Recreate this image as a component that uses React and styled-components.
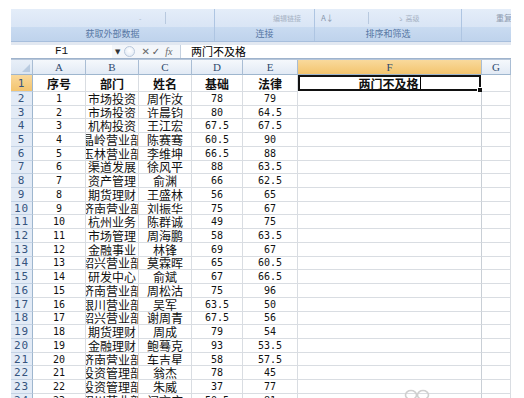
import React from "react";
import styled, { createGlobalStyle, css } from "styled-components";

const Global = createGlobalStyle`
  html, body { margin: 0; padding: 0; background: #ffffff; }
  body { width: 524px; height: 398px; overflow: hidden; }
`;

const Page = styled.div`
  position: relative;
  width: 524px;
  height: 398px;
  overflow: hidden;
  padding: 9px 13px 0 11px;
  box-sizing: border-box;
  background: #fff;
`;

const Window = styled.div`
  width: 500px;
  display: flex;
  flex-direction: column;
`;

const Ribbon = styled.div`
  height: 33px;
  display: flex;
  background: #d6e3f3;
  border-bottom: 1px solid #a7bedc;
  box-sizing: border-box;
`;

const Group = styled.div`
  width: ${(p) => p.$w}px;
  display: flex;
  flex-direction: column;
  border-right: 1px solid #aec5e2;
  box-shadow: inset -1px 0 0 #eef4fb;
  box-sizing: border-box;
  ${(p) => p.$last && css`border-right: none; box-shadow: none;`}
`;

const GroupBody = styled.div`
  flex: 1;
  position: relative;
  display: flex;
  align-items: center;
  background: linear-gradient(#e4edf9, #d9e5f5);
  font-family: "Noto Sans CJK SC", sans-serif;
  font-size: 8px;
  color: #9aa9bd;
  overflow: hidden;
  white-space: nowrap;
`;

const GroupLabel = styled.div`
  height: 14px;
  line-height: 14px;
  text-align: center;
  background: linear-gradient(#c9dbf1, #bfd3ec);
  font-family: "Noto Sans CJK SC", sans-serif;
  font-size: 9px;
  color: #5777a3;
  white-space: nowrap;
  overflow: hidden;
`;

const Faint = styled.span`
  margin-left: ${(p) => p.$ml || 0}px;
  color: ${(p) => p.$c || "#a7b3c4"};
  font-size: ${(p) => p.$fs || 8}px;
  line-height: 1;
`;

const VLine = styled.span`
  display: inline-block;
  width: 1px;
  height: 12px;
  margin-left: ${(p) => p.$ml || 0}px;
  background: #b8c9df;
`;

const Spacer = styled.div`
  height: 3px;
  background: #e2e8f1;
`;

const FormulaBar = styled.div`
  height: 14px;
  display: flex;
  align-items: stretch;
  background: #fff;
  border-bottom: 1px solid #9fb3cc;
  box-sizing: border-box;
`;

const NameBox = styled.div`
  width: 101px;
  font-family: "Liberation Mono", monospace;
  font-size: 11px;
  line-height: 13px;
  text-align: center;
  color: #111;
  background: #fff;
`;

const Controls = styled.div`
  width: 68px;
  display: flex;
  align-items: center;
  background: #f3f6fa;
  border-right: 1px solid #c5d1e0;
  font-family: "DejaVu Sans", sans-serif;
  color: #555;
`;

const Arrow = styled.span`
  margin-left: 3px;
  font-size: 7px;
  color: #333;
`;

const RoundBtn = styled.span`
  margin-left: 4px;
  width: 11px;
  height: 11px;
  border-radius: 50%;
  border: 1px solid #b9c8dc;
  background: radial-gradient(circle at 50% 40%, #ffffff, #dde7f3);
  box-sizing: border-box;
`;

const Glyph = styled.span`
  margin-left: ${(p) => p.$ml}px;
  font-size: ${(p) => p.$fs || 10}px;
  color: ${(p) => p.$c || "#6a6a6a"};
  font-style: ${(p) => (p.$i ? "italic" : "normal")};
  font-family: ${(p) => (p.$i ? '"Liberation Serif", serif' : '"DejaVu Sans", sans-serif')};
  line-height: 1;
`;

const FormulaText = styled.div`
  flex: 1;
  padding-left: 10px;
  font-family: "Noto Sans CJK SC", sans-serif;
  font-size: 11px;
  line-height: 13px;
  color: #000;
`;

const Sheet = styled.div`
  display: grid;
  grid-template-columns: 22px 53px 53px 53px 51px 55px 184px 29px;
  grid-template-rows: 15px 17px repeat(23, 13.72px);
  border-top: 1px solid #b6c6da;
`;

const ColHead = styled.div`
  box-sizing: border-box;
  border-right: 1px solid #a9bdd4;
  border-bottom: 1px solid #9eb6ce;
  background: ${(p) =>
    p.$sel
      ? "linear-gradient(#f9d99c, #f3c46e)"
      : "linear-gradient(#f5f8fc, #e2eaf5)"};
  font-family: "Liberation Serif", serif;
  font-size: 11px;
  line-height: 14px;
  text-align: center;
  color: #2f4a6e;
  overflow: hidden;
`;

const Corner = styled(ColHead)`
  position: relative;
  background: linear-gradient(#e8eff8, #dae5f2);
  &::after {
    content: "";
    position: absolute;
    right: 2px;
    bottom: 2px;
    border-left: 8px solid transparent;
    border-bottom: 8px solid #b9cbe0;
  }
`;

const RowHead = styled.div`
  box-sizing: border-box;
  border-right: 1px solid #9eb6ce;
  border-bottom: 1px solid #c3d2e4;
  background: ${(p) =>
    p.$sel ? "linear-gradient(#f9d99c, #f3c46e)" : "#e3ebf6"};
  font-family: "DejaVu Sans Mono", monospace;
  font-size: 11px;
  letter-spacing: 1px;
  display: flex;
  align-items: center;
  justify-content: center;
  color: #35547e;
  overflow: hidden;
`;

const Cell = styled.div`
  position: relative;
  box-sizing: border-box;
  border-right: 1px solid ${(p) => (p.$edge ? "#c9cfd6" : "#d9dde2")};
  border-bottom: 1px solid #d9dde2;
  display: flex;
  align-items: center;
  justify-content: center;
  white-space: nowrap;
  overflow: hidden;
  color: #111;
  font-family: ${(p) =>
    p.$num
      ? '"DejaVu Sans Mono", "Noto Sans CJK SC", monospace'
      : '"Noto Sans CJK SC", sans-serif'};
  font-size: ${(p) => (p.$bold ? 12 : p.$num ? 10 : 12)}px;
  font-weight: ${(p) => (p.$bold ? 700 : 400)};
  ${(p) =>
    p.$active &&
    css`
      overflow: visible;
      box-shadow: inset 0 0 0 2px #111;
      border-color: transparent;
    `}
`;

const Caret = styled.span`
  display: inline-block;
  width: 1px;
  height: 12px;
  margin-left: 1px;
  background: #000;
`;

const Handle = styled.span`
  position: absolute;
  right: -2px;
  bottom: -2px;
  width: 4px;
  height: 4px;
  background: #111;
  border: 1px solid #fff;
`;

const Watermark = styled.svg`
  position: absolute;
  left: 404px;
  top: 388px;
`;

const cols = ["A", "B", "C", "D", "E", "F", "G"];

const rows = [
  ["1", "市场投资", "周作汝", "78", "79"],
  ["2", "市场投资", "许晨钧", "80", "64.5"],
  ["3", "机构投资", "王江宏", "67.5", "67.5"],
  ["4", "晶岭营业部", "陈赛骞", "60.5", "90"],
  ["5", "玉林营业部", "李维坤", "66.5", "88"],
  ["6", "渠道发展", "徐风平", "88", "63.5"],
  ["7", "资产管理", "俞渊", "66", "62.5"],
  ["8", "期货理财", "王盛林", "56", "65"],
  ["9", "济南营业部", "刘振华", "75", "67"],
  ["10", "杭州业务", "陈群诚", "49", "75"],
  ["11", "市场管理", "周海鹏", "58", "63.5"],
  ["12", "金融事业", "林锋", "69", "67"],
  ["13", "绍兴营业部", "莫霖晖", "65", "60.5"],
  ["14", "研发中心", "俞斌", "67", "66.5"],
  ["15", "济南营业部", "周松沽", "75", "96"],
  ["16", "银川营业部", "吴军", "63.5", "50"],
  ["17", "绍兴营业部", "谢周青", "67.5", "56"],
  ["18", "期货理财", "周成", "79", "54"],
  ["19", "金融理财", "鲍蓦克", "93", "53.5"],
  ["20", "济南营业部", "车吉星", "58", "57.5"],
  ["21", "投资管理部", "翁杰", "78", "45"],
  ["22", "投资管理部", "朱威", "37", "77"],
  ["23", "银川营业部", "闫文庆", "50.5", "81"],
];

export default function App() {
  return (
    <>
      <Global />
      <Page>
        <Window>
          <Ribbon>
            <Group $w={204}>
              <GroupBody>
                <Faint $ml={128} $fs={7}>-</Faint>
                <VLine $ml={24} />
              </GroupBody>
              <GroupLabel>获取外部数据</GroupLabel>
            </Group>
            <Group $w={100}>
              <GroupBody>
                <Faint $ml={58} $fs={7}>编辑链接</Faint>
              </GroupBody>
              <GroupLabel>连接</GroupLabel>
            </Group>
            <Group $w={147}>
              <GroupBody>
                <Faint $ml={6} $fs={8} $c="#8796ab">A↓</Faint>
                <VLine $ml={34} />
                <Faint $ml={28} $fs={7}>ゝ 高级</Faint>
              </GroupBody>
              <GroupLabel>排序和筛选</GroupLabel>
            </Group>
            <Group $w={49} $last>
              <GroupBody>
                <Faint $ml={34} $fs={8} $c="#8e9bb0">重复</Faint>
              </GroupBody>
              <GroupLabel />
            </Group>
          </Ribbon>
          <Spacer />
          <FormulaBar>
            <NameBox>F1</NameBox>
            <Controls>
              <Arrow>▼</Arrow>
              <RoundBtn />
              <Glyph $ml={6} $fs={10}>✕</Glyph>
              <Glyph $ml={2} $fs={10} $c="#5a5a5a">✓</Glyph>
              <Glyph $ml={5} $fs={10} $i>fx</Glyph>
            </Controls>
            <FormulaText>两门不及格</FormulaText>
          </FormulaBar>
          <Sheet>
            <Corner />
            {cols.map((c) => (
              <ColHead key={c} $sel={c === "F"}>
                {c}
              </ColHead>
            ))}
            <RowHead $sel>1</RowHead>
            <Cell $bold>序号</Cell>
            <Cell $bold>部门</Cell>
            <Cell $bold>姓名</Cell>
            <Cell $bold>基础</Cell>
            <Cell $bold>法律</Cell>
            <Cell $bold $active>
              两门不及格
              <Caret />
              <Handle />
            </Cell>
            <Cell />
            {rows.map((r, i) => (
              <React.Fragment key={i}>
                <RowHead>{i + 2}</RowHead>
                <Cell $num>{r[0]}</Cell>
                <Cell>{r[1]}</Cell>
                <Cell>{r[2]}</Cell>
                <Cell $num>{r[3]}</Cell>
                <Cell $num>{r[4]}</Cell>
                <Cell $edge />
                <Cell />
              </React.Fragment>
            ))}
          </Sheet>
        </Window>
        <Watermark width="26" height="14" viewBox="0 0 26 14">
          <ellipse cx="7" cy="7" rx="5.5" ry="4.5" fill="none" stroke="#cfcfcf" strokeWidth="1.6" />
          <ellipse cx="19" cy="7" rx="5.5" ry="4.5" fill="none" stroke="#cfcfcf" strokeWidth="1.6" />
        </Watermark>
      </Page>
    </>
  );
}
